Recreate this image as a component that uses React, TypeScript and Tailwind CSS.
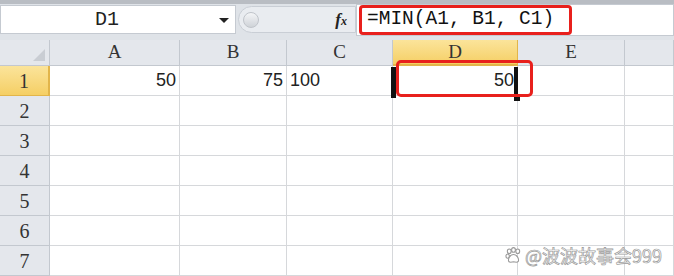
import React from "react";

const cols = ["A", "B", "C", "D", "E", ""];
const rows = [1, 2, 3, 4, 5, 6, 7];

const mono = { fontFamily: '"Liberation Mono", "DejaVu Sans Mono", monospace' };
const serif = { fontFamily: '"Liberation Serif", "DejaVu Serif", serif' };
const sans = { fontFamily: '"Liberation Sans", Arial, sans-serif' };

const values: Record<string, { text: string; align: "left" | "right" }> = {
  A1: { text: "50", align: "right" },
  B1: { text: "75", align: "right" },
  C1: { text: "100", align: "left" },
  D1: { text: "50", align: "right" },
};

const App = () => {
  return (
    <div className="relative w-[674px] h-[276px] overflow-hidden bg-white">
      {/* Formula bar */}
      <div className="h-[40px] bg-[#dfe3e8] border-t-[4px] border-[#b9bdc3] flex items-start pt-[1px]">
        <div className="w-[236px] h-[29px] bg-white border border-[#c5cad1] flex items-center relative">
          <span className="flex-1 text-center text-[20px] text-[#222] pl-[8px] pr-[30px]" style={mono}>
            D1
          </span>
          <span className="absolute left-[218px] top-[12px] w-0 h-0 border-l-[5px] border-r-[5px] border-t-[5px] border-l-transparent border-r-transparent border-t-[#222]" />
        </div>
        <div className="w-[120px] h-[29px] flex items-center pl-[2px]">
          <div className="flex-1 h-[27px] rounded-l-full bg-[#e9ecf0] border border-[#c9ced5] flex items-center pl-[4px] pr-[8px]">
            <span className="w-[16px] h-[16px] rounded-full bg-gradient-to-b from-[#f4f5f7] to-[#cfd3d8] border border-[#c0c4ca]" />
            <span className="ml-auto text-[17px] italic font-bold text-[#222]" style={serif}>
              f<span className="text-[12px]">x</span>
            </span>
          </div>
        </div>
        <div className="flex-1 h-[32px] bg-white border border-[#c5cad1] flex items-center pl-[2px] -mt-[1px]">
          <div className="h-[30px] w-[213px] border-[3px] border-[#e8201c] rounded-[4px] flex items-center pl-[5px]">
            <span className="text-[19.5px] text-[#111] whitespace-pre" style={mono}>
              =MIN(A1, B1, C1)
            </span>
          </div>
        </div>
      </div>

      {/* Grid */}
      <div className="grid grid-cols-[50px_130px_107px_106px_125px_107px_1fr] grid-rows-[26px_repeat(7,30px)]">
        <div className="bg-[#e4e7ec] border-r border-b border-[#c3c8cf] relative">
          <span className="absolute right-[4px] bottom-[4px] w-0 h-0 border-l-[12px] border-b-[12px] border-l-transparent border-b-[#c9cdd3]" />
        </div>
        {cols.map((c, i) => (
          <div
            key={"h" + i}
            className={
              c === "D"
                ? "bg-gradient-to-b from-[#fbe49a] to-[#f5cf64] border-r border-b-2 border-[#e2b54a] flex items-center justify-center text-[19px] text-[#333]"
                : "bg-[#e4e7ec] border-r border-b border-[#c3c8cf] flex items-center justify-center text-[19px] text-[#333]"
            }
            style={serif}
          >
            {c}
          </div>
        ))}
        {rows.map((r) => (
          <React.Fragment key={r}>
            <div
              className={
                r === 1
                  ? "bg-gradient-to-b from-[#fbe49a] to-[#f5cf64] border-r-2 border-b border-[#e2b54a] flex items-center justify-center text-[20px] text-[#333]"
                  : "bg-[#e4e7ec] border-r border-b border-[#c3c8cf] flex items-center justify-center text-[20px] text-[#333]"
              }
              style={serif}
            >
              {r}
            </div>
            {cols.map((c, i) => {
              const v = c ? values[c + r] : undefined;
              return (
                <div
                  key={c + r + i}
                  className={
                    "border-r border-b border-[#d6d8db] flex items-center text-[18px] text-[#222] " +
                    (v?.align === "left" ? "justify-start pl-[3px]" : "justify-end pr-[3px]")
                  }
                  style={sans}
                >
                  {v ? v.text : ""}
                </div>
              );
            })}
          </React.Fragment>
        ))}
      </div>

      {/* Active cell D1 */}
      <div className="absolute left-[391px] top-[67px] w-[127px] h-[31px] border-l-[5px] border-r-[4px] border-[#111]" />
      <div className="absolute left-[514px] top-[97px] w-[6px] h-[4px] bg-[#111]" />
      {/* Red highlight around D1 */}
      <div className="absolute left-[396px] top-[60px] w-[137px] h-[37px] border-[3px] border-[#e8201c] rounded-[5px]" />

      {/* Watermark */}
      <div
        className="absolute left-[505px] top-[242px] flex items-center gap-[3px] text-[18px] text-white"
        style={{
          fontFamily: '"Noto Sans CJK SC", sans-serif',
          WebkitTextStroke: "0.7px #9a9a9a",
        }}
      >
        <svg width="17" height="17" viewBox="0 0 16 16">
          <g fill="white" stroke="#9a9a9a" strokeWidth="1">
            <ellipse cx="4" cy="4" rx="1.8" ry="2.2" />
            <ellipse cx="8" cy="2.8" rx="1.8" ry="2.2" />
            <ellipse cx="12" cy="4" rx="1.8" ry="2.2" />
            <ellipse cx="2.5" cy="8.5" rx="1.6" ry="2" />
            <path d="M8 7 C11 7 13.5 11 12.5 13.5 C11.5 15 9.5 14 8 14 C6.5 14 4.5 15 3.5 13.5 C2.5 11 5 7 8 7 Z" />
          </g>
        </svg>
        <span>@波波故事会999</span>
      </div>
    </div>
  );
};

export default App;
